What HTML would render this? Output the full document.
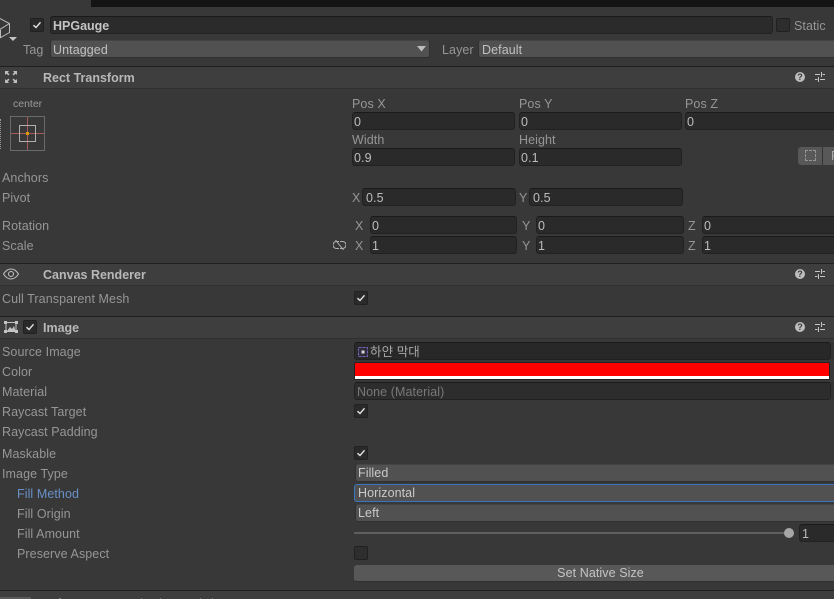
<!DOCTYPE html>
<html><head><meta charset="utf-8">
<style>
html,body{margin:0;padding:0;background:#383838}
#r{position:relative;width:834px;height:599px;overflow:hidden;background:#383838;font-family:"Liberation Sans","Noto Sans CJK KR",sans-serif;font-size:12.5px;letter-spacing:.08px;color:#a8a8a8}
#r div,#r svg{position:absolute}
.t{line-height:16px;height:16px;margin-top:1px;white-space:nowrap}
.b{font-weight:bold;color:#b8b8b8;font-size:12.5px;letter-spacing:0}
.f{box-sizing:border-box;height:18px;background:#2a2a2a;border:1px solid #212121;border-top-color:#1a1a1a;border-radius:3px;color:#bcbcbc;line-height:18px;padding-left:1px;white-space:nowrap;overflow:hidden}
.d{box-sizing:border-box;height:18px;background:#515151;border:1px solid #303030;border-top-color:#444;border-radius:3px;color:#cacaca;line-height:18px;padding-left:3px;white-space:nowrap;overflow:hidden}
.c{box-sizing:border-box;width:14px;height:14px;background:#2a2a2a;border:1px solid #212121;border-radius:2px}
.h{left:0;width:834px;height:21px;background:#3e3e3e;border-top:1px solid #1f1f1f;border-bottom:1px solid #303030;box-sizing:content-box}
.l{color:#969696}
</style></head><body>
<div id="r">
<div style="left:91px;top:0;width:743px;height:7px;background:#141414"></div>

<svg style="left:0;top:17px" width="11" height="23" viewBox="0 0 11 23" fill="none" stroke="#bcbcbc" stroke-width="1"><path d="M-1 1L9.500 6.500V15.500L-1 21.500M-1 13L9.500 6.500M.5 13V21"/></svg>
<svg style="left:9px;top:37px" width="8" height="5"><path d="M0 0H8L4 4Z" fill="#c4c4c4"/></svg>

<div class="c" style="left:30px;top:18px"><svg style="left:1px;top:1px" width="10" height="10" viewBox="0 0 10 10"><path d="M1.500 5.200L4 7.500L8.500 2.300" fill="none" stroke="#e4e4e4" stroke-width="1.400"/></svg></div>
<div class="f b" style="left:50px;top:16px;width:723px;padding-left:2px;color:#c4c4c4;background:#2b2b2b">HPGauge</div>
<div class="c" style="left:776px;top:18px;background:#2d2d2d"></div>
<div class="t" style="left:794px;top:17px;color:#969696">Static</div>

<div class="t l" style="left:23px;top:41px">Tag</div>
<div class="d" style="left:50px;top:40px;width:380px;color:#c0c0c0;padding-left:2px">Untagged</div>
<svg style="left:417px;top:46px" width="9" height="6"><path d="M0 0H9L4.500 5.500Z" fill="#bcbcbc"/></svg>
<div class="t l" style="left:442px;top:41px">Layer</div>
<div class="d" style="left:478px;top:40px;width:360px;color:#c0c0c0">Default</div>

<div class="h" style="top:66px"></div>
<svg style="left:4px;top:70px" width="14" height="14" viewBox="0 0 14 14" fill="#bdbdbd"><path d="M1 1H5L3.800 2.400L5.500 4.400L4.400 5.400L2.400 3.800L1 5ZM13 1V5L11.600 3.800L9.600 5.400L8.500 4.400L10.200 2.400L9 1ZM1 13V9L2.400 10.200L4.400 8.600L5.500 9.600L3.800 11.600L5 13ZM13 13H9L10.200 11.600L8.500 9.600L9.600 8.600L11.600 10.200L13 9Z"/></svg>
<div class="t b" style="left:43px;top:69px">Rect Transform</div>
<svg style="left:794px;top:71px" width="12" height="12" viewBox="0 0 12 12"><circle cx="6" cy="6" r="5" fill="#bdbdbd"/><text x="6" y="9.200" font-size="9" font-weight="bold" text-anchor="middle" fill="#3a3a3a" font-family="Liberation Sans">?</text></svg>
<svg style="left:814px;top:71px" width="12" height="12" viewBox="0 0 12 12" fill="none" stroke="#c4c4c4" stroke-width="1"><path d="M1 3.500H6M8.500 3.500H11M1 8.500H3.500M6 8.500H11M7.500 1V6M4.500 6V11"/></svg>

<div class="t" style="left:13px;top:95px;font-size:10.5px;letter-spacing:0;color:#9a9a9a">center</div>
<div style="left:0;top:119px;width:1px;height:30px;border-left:1px dotted #999"></div>
<div style="left:10px;top:116px;width:33px;height:33px;border:1px solid #6a6a6a"></div>
<div style="left:11px;top:133px;width:33px;height:1px;background:#a85a5a"></div>
<div style="left:27px;top:117px;width:1px;height:33px;background:#a85a5a"></div>
<div style="left:19px;top:125px;width:15px;height:15px;border:1px solid #b0b0b0"></div>
<div style="left:26px;top:132px;width:3px;height:3px;background:#d99a00"></div>

<div class="t l" style="left:352px;top:95px">Pos X</div>
<div class="t l" style="left:519px;top:95px">Pos Y</div>
<div class="t l" style="left:685px;top:95px">Pos Z</div>
<div class="f" style="left:352px;top:112px;width:163px">0</div>
<div class="f" style="left:519px;top:112px;width:163px">0</div>
<div class="f" style="left:685px;top:112px;width:160px">0</div>
<div class="t l" style="left:352px;top:131px">Width</div>
<div class="t l" style="left:519px;top:131px">Height</div>
<div class="f" style="left:352px;top:148px;width:163px">0.9</div>
<div class="f" style="left:519px;top:148px;width:163px">0.1</div>
<div style="left:798px;top:147px;width:24px;height:18px;background:#585858;border-radius:3px 0 0 3px"></div>
<div style="left:805px;top:150px;width:9px;height:9px;border:1px dashed #949494"></div>
<div style="left:822px;top:147px;width:12px;height:18px;background:#585858;border-left:1px solid #333;color:#a8a8a8;line-height:18px;padding-left:8px;box-sizing:border-box;overflow:hidden">R</div>

<div class="t l" style="left:2px;top:169px">Anchors</div>
<div class="t l" style="left:2px;top:189px">Pivot</div>
<div class="t l" style="left:352px;top:189px">X</div>
<div class="f" style="left:362px;top:188px;width:154px;padding-left:3px">0.5</div>
<div class="t l" style="left:519px;top:189px">Y</div>
<div class="f" style="left:529px;top:188px;width:154px;padding-left:3px">0.5</div>

<div class="t l" style="left:2px;top:217px">Rotation</div>
<div class="t l" style="left:355px;top:217px">X</div>
<div class="f" style="left:370px;top:216px;width:147px">0</div>
<div class="t l" style="left:522px;top:217px">Y</div>
<div class="f" style="left:536px;top:216px;width:148px">0</div>
<div class="t l" style="left:688px;top:217px">Z</div>
<div class="f" style="left:702px;top:216px;width:140px">0</div>
<div class="t l" style="left:2px;top:237px">Scale</div>
<svg style="left:333px;top:240px" width="13" height="10" viewBox="0 0 13 10" fill="none" stroke="#b0b0b0" stroke-width="1"><path d="M6 1.500H3.500A3.500 3.500 0 0 0 3.500 8.500H6M7 1.500H9.500A3.500 3.500 0 0 1 9.500 8.500H7M2.500 0L10.500 10"/></svg>
<div class="t l" style="left:355px;top:237px">X</div>
<div class="f" style="left:370px;top:236px;width:147px">1</div>
<div class="t l" style="left:522px;top:237px">Y</div>
<div class="f" style="left:536px;top:236px;width:148px">1</div>
<div class="t l" style="left:688px;top:237px">Z</div>
<div class="f" style="left:702px;top:236px;width:140px">1</div>

<div class="h" style="top:263px"></div>
<svg style="left:3px;top:268px" width="16" height="12" viewBox="0 0 16 12" fill="none" stroke="#c4c4c4" stroke-width="1"><path d="M.5 6C3 2 5.500 1 8 1S13 2 15.500 6C13 10 10.500 11 8 11S3 10 .5 6Z"/><circle cx="8" cy="6" r="2.500"/></svg>
<div class="t b" style="left:43px;top:266px">Canvas Renderer</div>
<svg style="left:794px;top:268px" width="12" height="12" viewBox="0 0 12 12"><circle cx="6" cy="6" r="5" fill="#bdbdbd"/><text x="6" y="9.200" font-size="9" font-weight="bold" text-anchor="middle" fill="#3a3a3a" font-family="Liberation Sans">?</text></svg>
<svg style="left:814px;top:268px" width="12" height="12" viewBox="0 0 12 12" fill="none" stroke="#c4c4c4" stroke-width="1"><path d="M1 3.500H6M8.500 3.500H11M1 8.500H3.500M6 8.500H11M7.500 1V6M4.500 6V11"/></svg>
<div class="t l" style="left:2px;top:290px">Cull Transparent Mesh</div>
<div class="c" style="left:354px;top:291px"><svg style="left:1px;top:1px" width="10" height="10" viewBox="0 0 10 10"><path d="M1.500 5.200L4 7.500L8.500 2.300" fill="none" stroke="#e4e4e4" stroke-width="1.400"/></svg></div>

<div class="h" style="top:316px"></div>
<svg style="left:4px;top:320px" width="14" height="14" viewBox="0 0 14 14" fill="none" stroke="#c4c4c4" stroke-width="1"><path d="M2 2.500H12V11.500H2Z"/><path d="M0 1H3V4H0ZM11 1H14V4H11ZM0 10H3V13H0ZM11 10H14V13H11Z" fill="#c4c4c4" stroke="none"/><path d="M3 11L6 7L8 9L10 6L11.500 11Z" fill="#c4c4c4" stroke="none"/></svg>
<div class="c" style="left:23px;top:320px"><svg style="left:1px;top:1px" width="10" height="10" viewBox="0 0 10 10"><path d="M1.500 5.200L4 7.500L8.500 2.300" fill="none" stroke="#e4e4e4" stroke-width="1.400"/></svg></div>
<div class="t b" style="left:43px;top:319px">Image</div>
<svg style="left:794px;top:321px" width="12" height="12" viewBox="0 0 12 12"><circle cx="6" cy="6" r="5" fill="#bdbdbd"/><text x="6" y="9.200" font-size="9" font-weight="bold" text-anchor="middle" fill="#3a3a3a" font-family="Liberation Sans">?</text></svg>
<svg style="left:814px;top:321px" width="12" height="12" viewBox="0 0 12 12" fill="none" stroke="#c4c4c4" stroke-width="1"><path d="M1 3.500H6M8.500 3.500H11M1 8.500H3.500M6 8.500H11M7.500 1V6M4.500 6V11"/></svg>

<div class="t l" style="left:2px;top:343px">Source Image</div>
<div class="f" style="left:354px;top:342px;width:477px;padding-left:15px;background:#282828;color:#a8a8a8">하얀 막대</div>
<div style="left:831px;top:342px;width:3px;height:18px;background:#333"></div>
<svg style="left:358px;top:347px" width="10" height="10" viewBox="0 0 10 10"><rect x=".5" y=".5" width="9" height="9" fill="#2e2b3a" stroke="#7a64b8" stroke-dasharray="3 1"/><rect x="3.500" y="3.500" width="3" height="3" fill="#d8d8d8"/></svg>

<div class="t l" style="left:2px;top:363px">Color</div>
<div style="left:354px;top:362px;width:476px;height:18px;background:#222;border-radius:2px"></div>
<div style="left:355px;top:363px;width:474px;height:13px;background:#f00"></div>
<div style="left:355px;top:376px;width:474px;height:3px;background:#fff"></div>

<div class="t l" style="left:2px;top:383px">Material</div>
<div class="f" style="left:354px;top:382px;width:477px;padding-left:2px;color:#787878;background:#2d2d2d">None (Material)</div>
<div style="left:831px;top:382px;width:3px;height:18px;background:#333"></div>
<div class="t l" style="left:2px;top:403px">Raycast Target</div>
<div class="c" style="left:354px;top:404px"><svg style="left:1px;top:1px" width="10" height="10" viewBox="0 0 10 10"><path d="M1.500 5.200L4 7.500L8.500 2.300" fill="none" stroke="#e4e4e4" stroke-width="1.400"/></svg></div>
<div class="t l" style="left:2px;top:423px">Raycast Padding</div>
<div class="t l" style="left:2px;top:445px">Maskable</div>
<div class="c" style="left:354px;top:446px"><svg style="left:1px;top:1px" width="10" height="10" viewBox="0 0 10 10"><path d="M1.500 5.200L4 7.500L8.500 2.300" fill="none" stroke="#e4e4e4" stroke-width="1.400"/></svg></div>

<div class="t l" style="left:2px;top:465px">Image Type</div>
<div class="d" style="left:355px;top:464px;width:490px;padding-left:2px;line-height:16px">Filled</div>
<div class="t" style="left:17px;top:485px;color:#6890c8">Fill Method</div>
<div class="d" style="left:354px;top:484px;width:490px;border-color:#3a76c0;line-height:16px">Horizontal</div>
<div class="t l" style="left:17px;top:505px">Fill Origin</div>
<div class="d" style="left:355px;top:504px;width:490px;padding-left:2px;line-height:16px">Left</div>
<div class="t l" style="left:17px;top:525px">Fill Amount</div>
<div style="left:354px;top:532px;width:436px;height:2px;background:#5e5e5e"></div>
<div style="left:784px;top:528px;width:10px;height:10px;border-radius:50%;background:#a6a6a6"></div>
<div class="f" style="left:799px;top:524px;width:50px;padding-left:2px">1</div>
<div class="t l" style="left:17px;top:545px">Preserve Aspect</div>
<div class="c" style="left:354px;top:546px;background:#2e2e2e"></div>
<div style="left:354px;top:565px;width:490px;height:17px;background:#585858;border-radius:3px;border-bottom:1px solid #303030;box-sizing:border-box"></div>
<div class="t" style="left:354px;top:564px;width:493px;text-align:center;color:#c4c4c4">Set Native Size</div>

<div style="left:0;top:590px;width:834px;height:1px;background:#1f1f1f"></div>
<div style="left:0;top:591px;width:834px;height:8px;background:#3e3e3e"></div>
<div style="left:0;top:597px;width:31px;height:2px;background:#5a5a5a"></div>
<div style="left:59px;top:598px;width:2px;height:1px;background:#777"></div>
<div style="left:141px;top:598px;width:1px;height:1px;background:#777"></div>
<div style="left:160px;top:598px;width:1px;height:1px;background:#777"></div>
<div style="left:200px;top:598px;width:1px;height:1px;background:#777"></div>
<div style="left:212px;top:598px;width:1px;height:1px;background:#777"></div>
</div>
</body></html>
